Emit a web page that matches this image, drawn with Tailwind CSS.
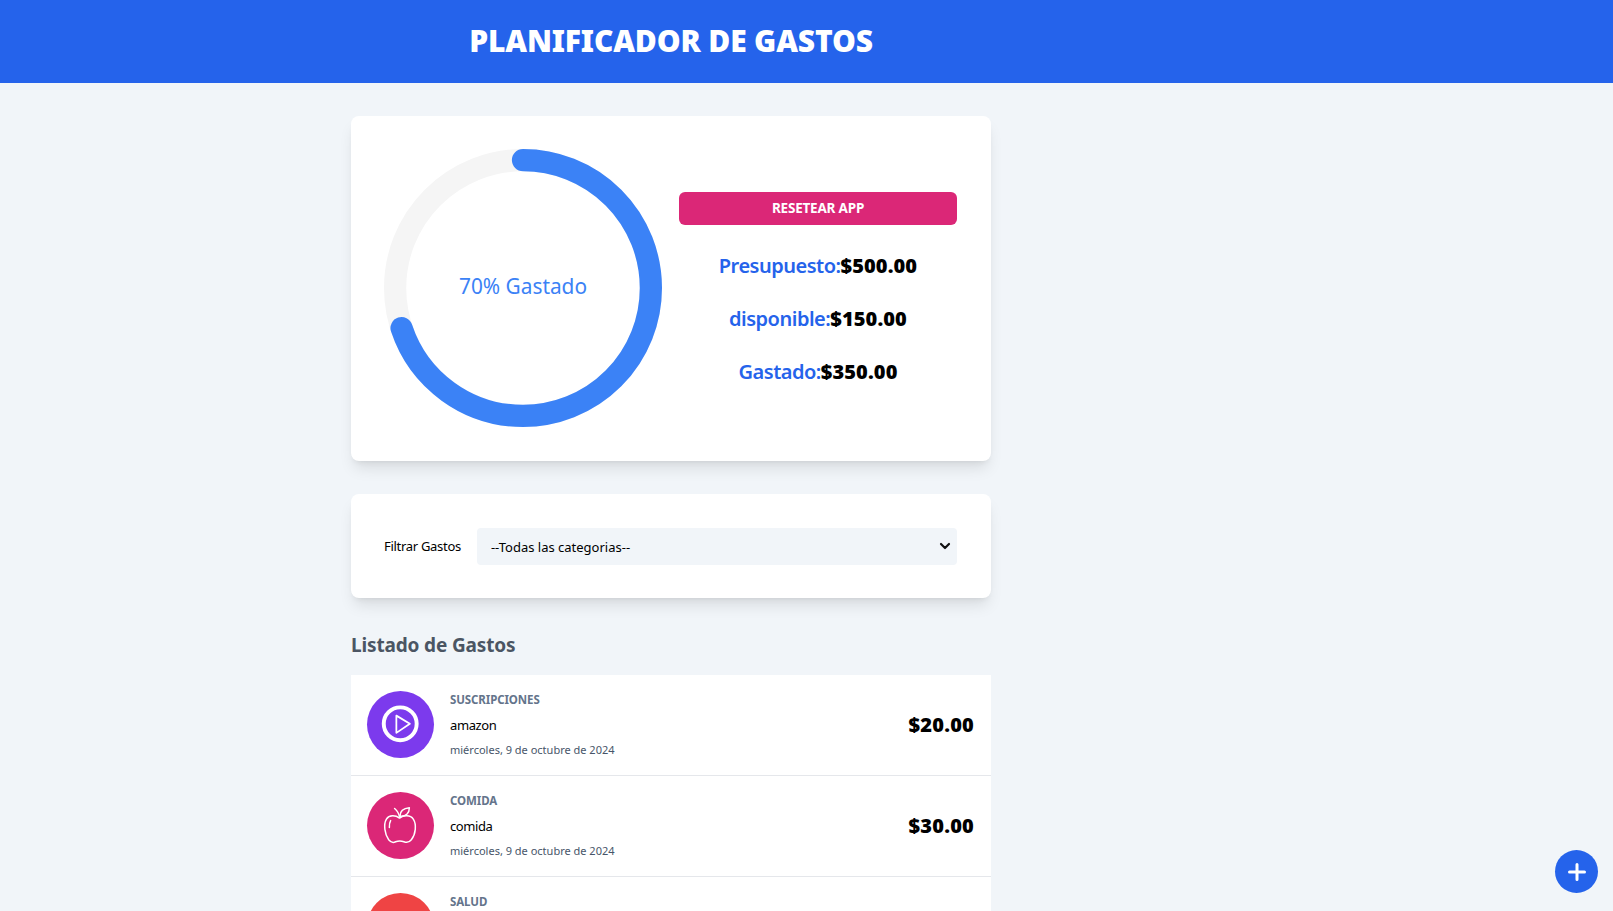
<!DOCTYPE html>
<html lang="es">
<head>
<meta charset="utf-8">
<title>Planificador de Gastos</title>
<script src="https://cdn.jsdelivr.net/npm/@tailwindcss/browser@4"></script>
</head>
<body class="h-screen overflow-hidden bg-[#f1f5f9] font-['Noto_Sans',sans-serif] relative">
  <header class="bg-[#2563eb] h-[83px] flex items-center">
    <div class="w-[1342px] text-center pb-[2px]">
      <h1 class="text-white text-3xl font-black uppercase tracking-[-0.15px]">Planificador de Gastos</h1>
    </div>
  </header>
  <div class="w-[1342px] pt-[33px]">
    <main class="w-[640px] mx-auto">
      <section class="bg-white rounded-lg shadow-lg pl-[33px] h-[345px] flex gap-[17px] items-center">
        <svg viewBox="0 0 100 100" class="w-[278px] h-[278px] shrink-0 mb-[2px]">
          <circle cx="50" cy="50" r="46" fill="none" stroke="#f5f5f5" stroke-width="8"></circle>
          <circle cx="50" cy="50" r="46" fill="none" stroke="#3b82f6" stroke-width="8" stroke-linecap="round" pathLength="100" stroke-dasharray="70 100" transform="rotate(-90 50 50)"></circle>
          <text x="50" y="50" text-anchor="middle" dominant-baseline="middle" fill="#3b82f6" class="text-[7.5px]">70% Gastado</text>
        </svg>
        <div class="w-[278px] flex flex-col gap-[25px] text-center">
          <button class="bg-[#db2777] text-white text-[13.5px] font-bold uppercase rounded-md h-[33px] mb-[2px] tracking-[-0.2px]">Resetear App</button>
          <p class="text-xl font-semibold text-[#2563eb]"><span class="tracking-[-0.5px]">Presupuesto:</span><span class="font-black text-black tracking-[0.1px]">$500.00</span></p>
          <p class="text-xl font-semibold text-[#2563eb]"><span class="tracking-[-0.5px]">disponible:</span><span class="font-black text-black tracking-[0.1px]">$150.00</span></p>
          <p class="text-xl font-semibold text-[#2563eb]"><span class="tracking-[-0.5px]">Gastado:</span><span class="font-black text-black tracking-[0.1px]">$350.00</span></p>
        </div>
      </section>
      <section class="bg-white rounded-lg shadow-lg mt-[33px] h-[104px] pl-[33px] pr-[34px] flex items-center gap-4">
        <label class="text-[13px] text-black tracking-[-0.3px] mt-[2px]">Filtrar Gastos</label>
        <div class="relative flex-1">
          <select class="appearance-none block w-full h-[37px] bg-[#f1f5f9] rounded pl-[14px] pr-8 pt-[3px] text-[13px] text-black">
            <option>--Todas las categorias--</option>
          </select>
          <svg viewBox="0 0 12 8" class="absolute right-[6px] top-[14px] w-[12px] h-[8px] pointer-events-none" fill="none" stroke="#111" stroke-width="2.2" stroke-linecap="round" stroke-linejoin="round"><path d="M2 2l4 4 4-4"></path></svg>
        </div>
      </section>
      <h2 class="text-[19px] font-bold text-[#4b5563] mt-[33px] h-[44px] tracking-[-0.15px]">Listado de Gastos</h2>
      <ul class="bg-white">
        <li class="pl-4 pr-[17px] py-4 flex items-center gap-4 border-b border-[#e5e7eb]">
          <div class="w-[67px] h-[67px] mb-px rounded-full bg-[#7c3aed] shrink-0">
            <svg viewBox="0 0 68 68" class="w-[67px] h-[67px]" fill="none" stroke="#fff">
              <circle cx="33.7" cy="33.3" r="16.7" stroke-width="4"></circle>
              <path d="M29.8 25 L43.5 33.3 L29.8 42.5 Z" stroke-width="1.8" stroke-linejoin="round"></path>
            </svg>
          </div>
          <div class="flex-1 flex flex-col gap-[7px]">
            <p class="text-[11.5px] leading-[18px] font-bold uppercase text-[#64748b] tracking-[-0.1px]">Suscripciones</p>
            <p class="text-[13px] leading-[18px] text-black tracking-[-0.4px]">amazon</p>
            <p class="text-[11px] leading-[18px] text-[#475569]">miércoles, 9 de octubre de 2024</p>
          </div>
          <p class="text-xl font-black text-black tracking-[0.2px]">$20.00</p>
        </li>
        <li class="pl-4 pr-[17px] py-4 flex items-center gap-4 border-b border-[#e5e7eb]">
          <div class="w-[67px] h-[67px] mb-px rounded-full bg-[#db2777] shrink-0">
            <svg viewBox="0 0 68 68" class="w-[67px] h-[67px]" fill="none" stroke="#fff" stroke-width="1.5" stroke-linecap="round" stroke-linejoin="round">
              <path d="M33 26.5 C29 23.5 22.5 23 19.7 27.5 C16.5 33 18 43 22 48.5 C24 51 27 51.5 29 50.5 C31.5 49.5 35 49.5 37.5 50.5 C40 51.5 43 51 45 48.5 C49.5 43 50.5 33 47 27.5 C44 23 37 23.5 33 26.5 Z"></path>
              <path d="M33 25.5 C32.5 22 30.5 19 28 16.8"></path>
              <path d="M33.5 24.5 C33.5 19.5 37.5 16.5 43 16 C43 21 40 25 33.5 24.5 Z"></path>
              <path d="M22.7 36 C22.5 33 22.8 31 24 29"></path>
            </svg>
          </div>
          <div class="flex-1 flex flex-col gap-[7px]">
            <p class="text-[11.5px] leading-[18px] font-bold uppercase text-[#64748b] tracking-[-0.1px]">Comida</p>
            <p class="text-[13px] leading-[18px] text-black tracking-[-0.4px]">comida</p>
            <p class="text-[11px] leading-[18px] text-[#475569]">miércoles, 9 de octubre de 2024</p>
          </div>
          <p class="text-xl font-black text-black tracking-[0.2px]">$30.00</p>
        </li>
        <li class="pl-4 pr-[17px] py-4 flex items-center gap-4 border-b border-[#e5e7eb]">
          <div class="w-[67px] h-[67px] mb-px rounded-full bg-[#ef4444] shrink-0"></div>
          <div class="flex-1 flex flex-col gap-[7px]">
            <p class="text-[11.5px] leading-[18px] font-bold uppercase text-[#64748b] tracking-[-0.1px]">Salud</p>
            <p class="h-[18px]"></p>
            <p class="h-[18px]"></p>
          </div>
        </li>
      </ul>
    </main>
  </div>
  <button class="absolute right-[15px] bottom-[18px] w-[43px] h-[43px] rounded-full bg-[#2563eb] flex items-center justify-center" aria-label="Nuevo gasto">
    <svg viewBox="0 0 24 24" class="w-[24px] h-[24px]" fill="none" stroke="#fff" stroke-width="3" stroke-linecap="round"><path d="M12 4.5v15M4.5 12h15"></path></svg>
  </button>
</body>
</html>
